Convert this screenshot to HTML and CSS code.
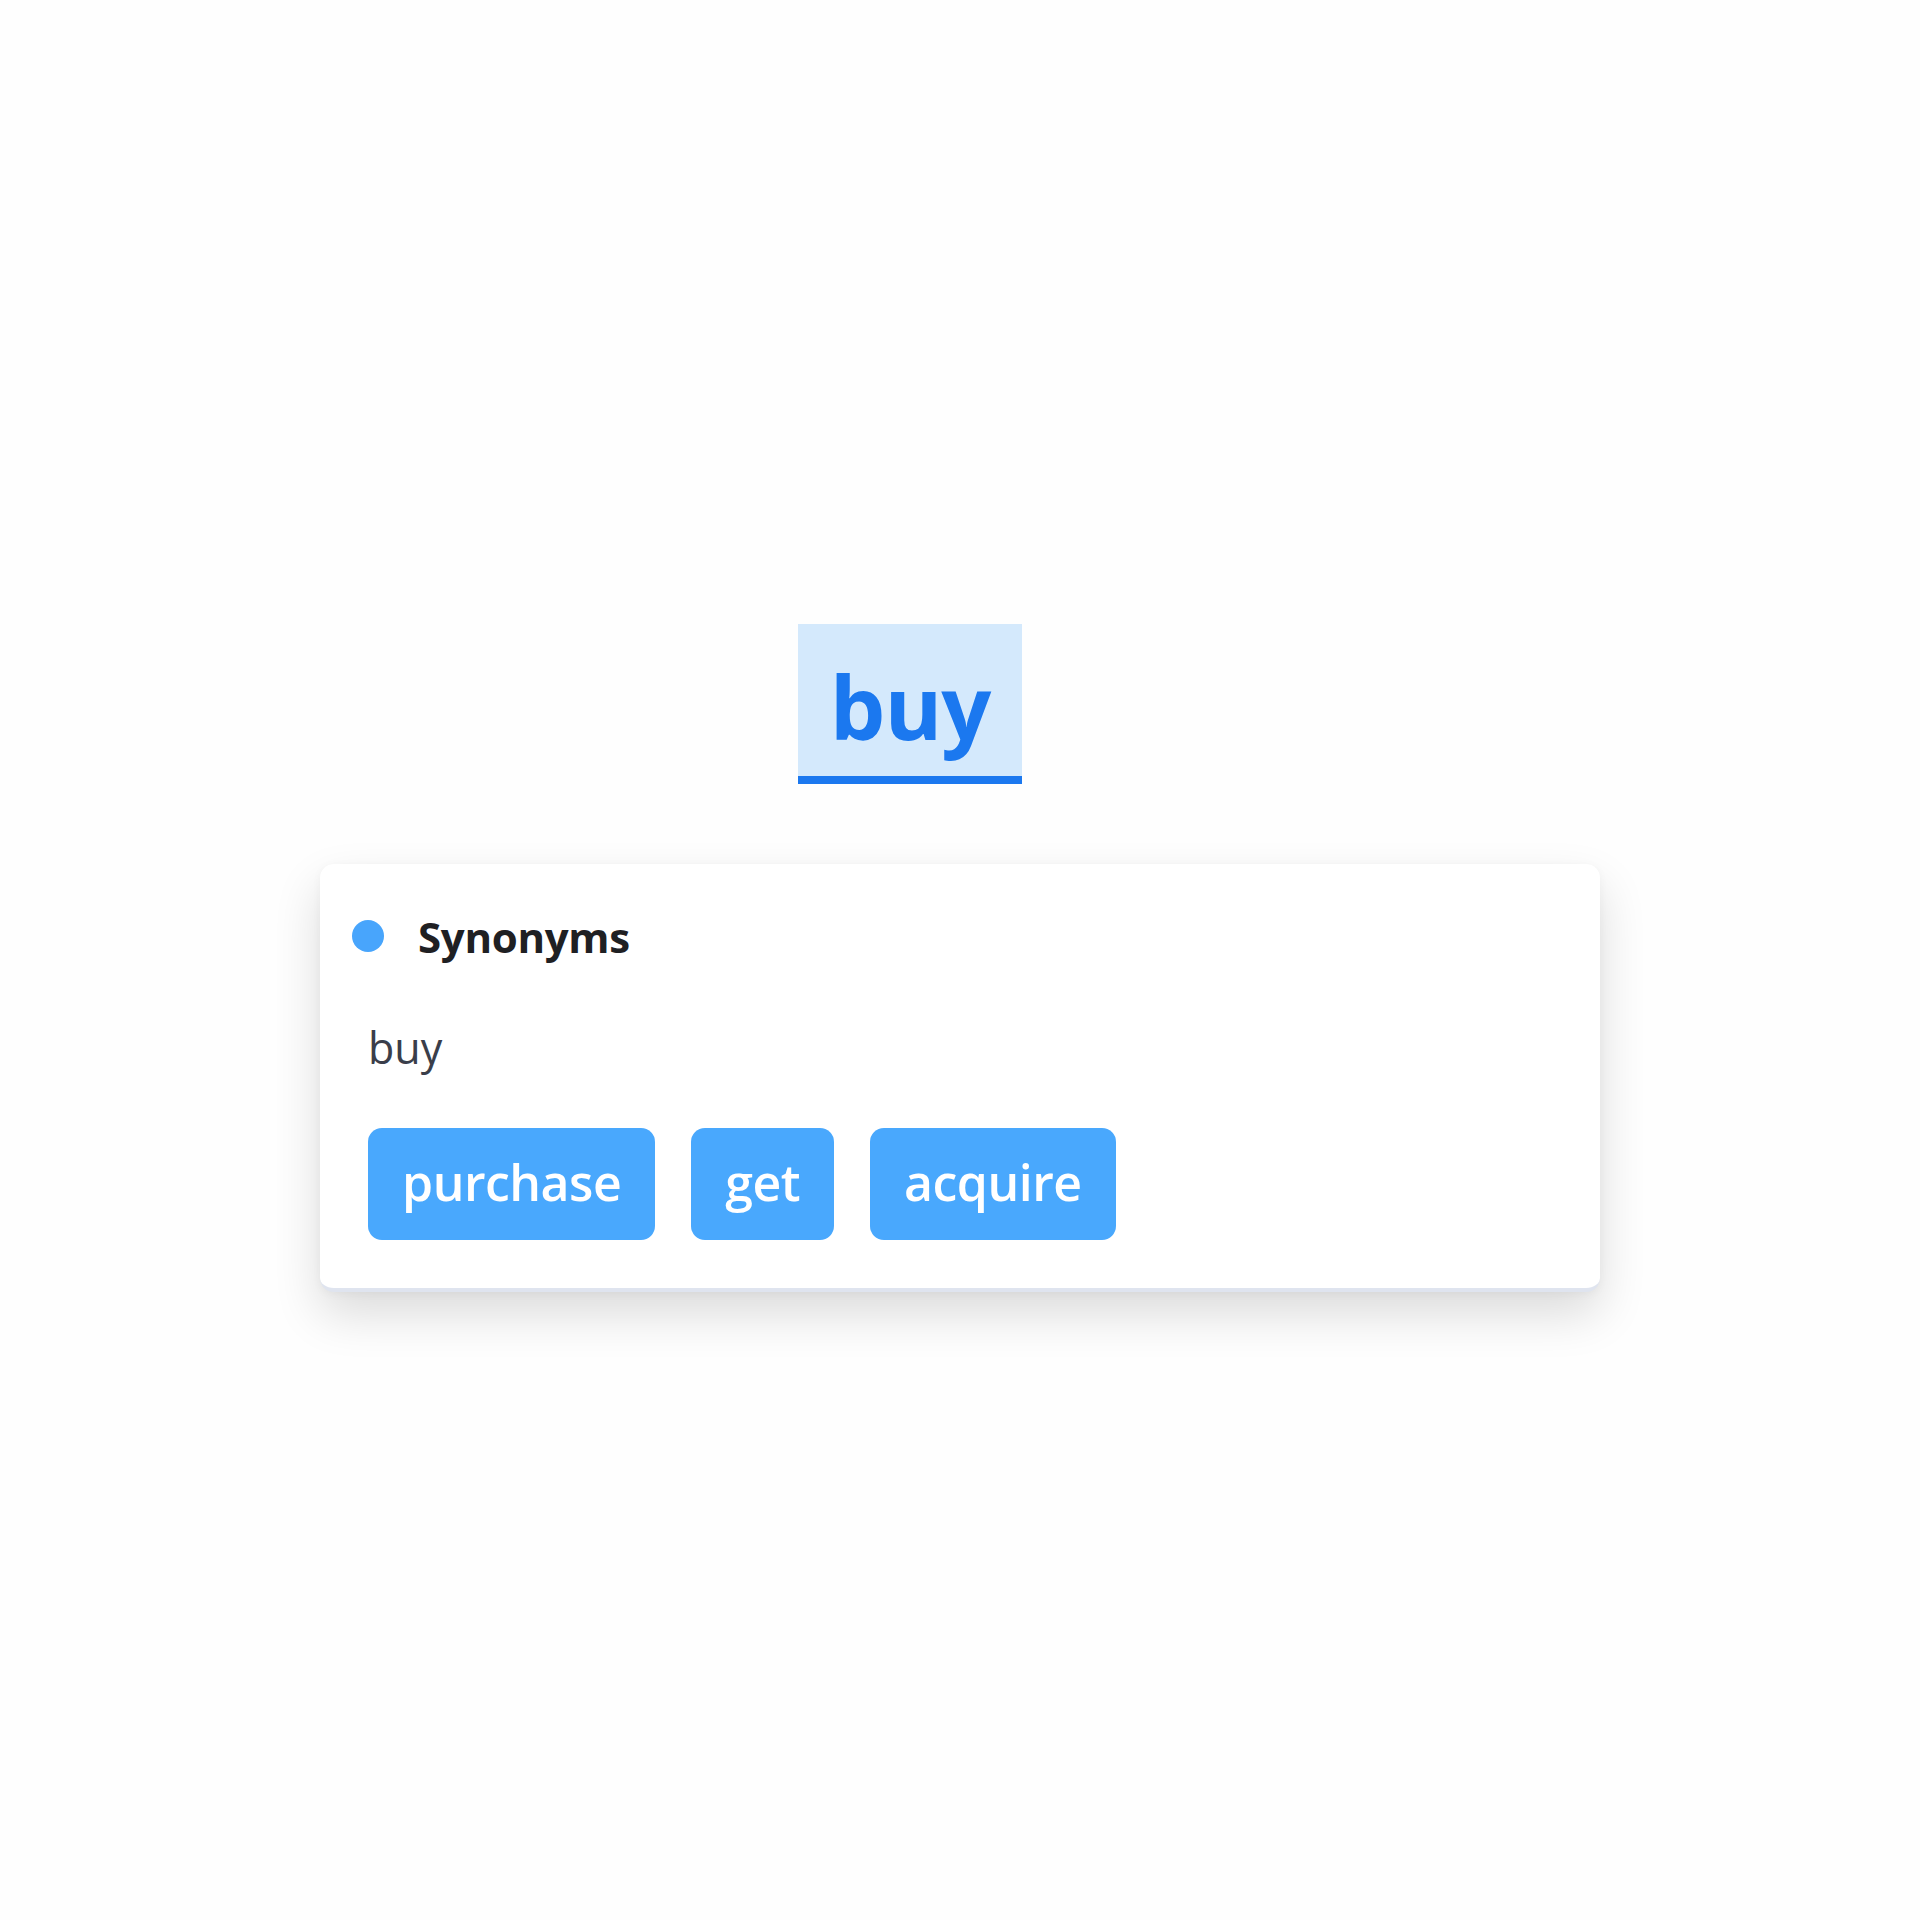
FILE: index.html
```html
<!DOCTYPE html>
<html>
<head>
<meta charset="utf-8">
<link rel="stylesheet" href="styles.css">
</head>
<body>
<main class="page">
  <div class="headword-row">
    <span class="headword">buy</span>
  </div>
  <section class="card">
    <header class="card-header">
      <span class="dot"></span>
      <h2 class="card-title">Synonyms</h2>
    </header>
    <div class="card-body">
      <p class="term">buy</p>
      <div class="chips">
        <span class="chip">purchase</span>
        <span class="chip">get</span>
        <span class="chip">acquire</span>
      </div>
    </div>
  </section>
</main>
</body>
</html>
```

FILE: styles.css
```css
html, body {
  margin: 0;
  padding: 0;
  background: #fefefe;
}
body {
  font-family: "Open Sans", "Noto Sans", sans-serif;
  min-height: 1920px;
}
.page {
  width: 1280px;
  margin-left: 320px;
  padding-top: 624px;
  padding-bottom: 200px;
  display: flex;
  flex-direction: column;
}
.headword-row {
  display: flex;
  padding-left: 478px;
}
.headword {
  display: block;
  box-sizing: border-box;
  width: 224px;
  height: 160px;
  background: #d4e9fc;
  border-bottom: 8px solid #1b78ef;
  color: #1b78ef;
  font-weight: 700;
  font-size: 88px;
  line-height: 164px;
  text-align: center;
  letter-spacing: -1px;
  overflow: hidden;
}
.card {
  margin-top: 80px;
  background: #fff;
  border-radius: 14px;
  border-bottom: 4px solid #dfe4ef;
  box-shadow: 0 22px 48px rgba(0, 0, 0, 0.14), 0 2px 10px rgba(0, 0, 0, 0.04);
  padding: 0 48px 48px 32px;
}
.card-header {
  display: flex;
  align-items: center;
  gap: 34px;
  height: 144px;
}
.dot {
  width: 32px;
  height: 32px;
  border-radius: 50%;
  background: #48a5fc;
  flex: none;
}
.card-title {
  margin: 0;
  font-size: 42px;
  font-weight: 700;
  color: #1f2023;
  letter-spacing: -0.3px;
}
.card-body {
  padding-left: 16px;
}
.term {
  margin: 16px 0 0;
  font-size: 43px;
  line-height: 48px;
  color: #3a3e4a;
  font-weight: 400;
}
.chips {
  display: flex;
  gap: 36px;
  margin-top: 56px;
}
.chip {
  display: block;
  height: 112px;
  line-height: 108px;
  padding: 0 34px;
  background: #49a8fd;
  color: #fff;
  border-radius: 14px;
  font-size: 50px;
  font-weight: 600;
  letter-spacing: -0.5px;
}
```
